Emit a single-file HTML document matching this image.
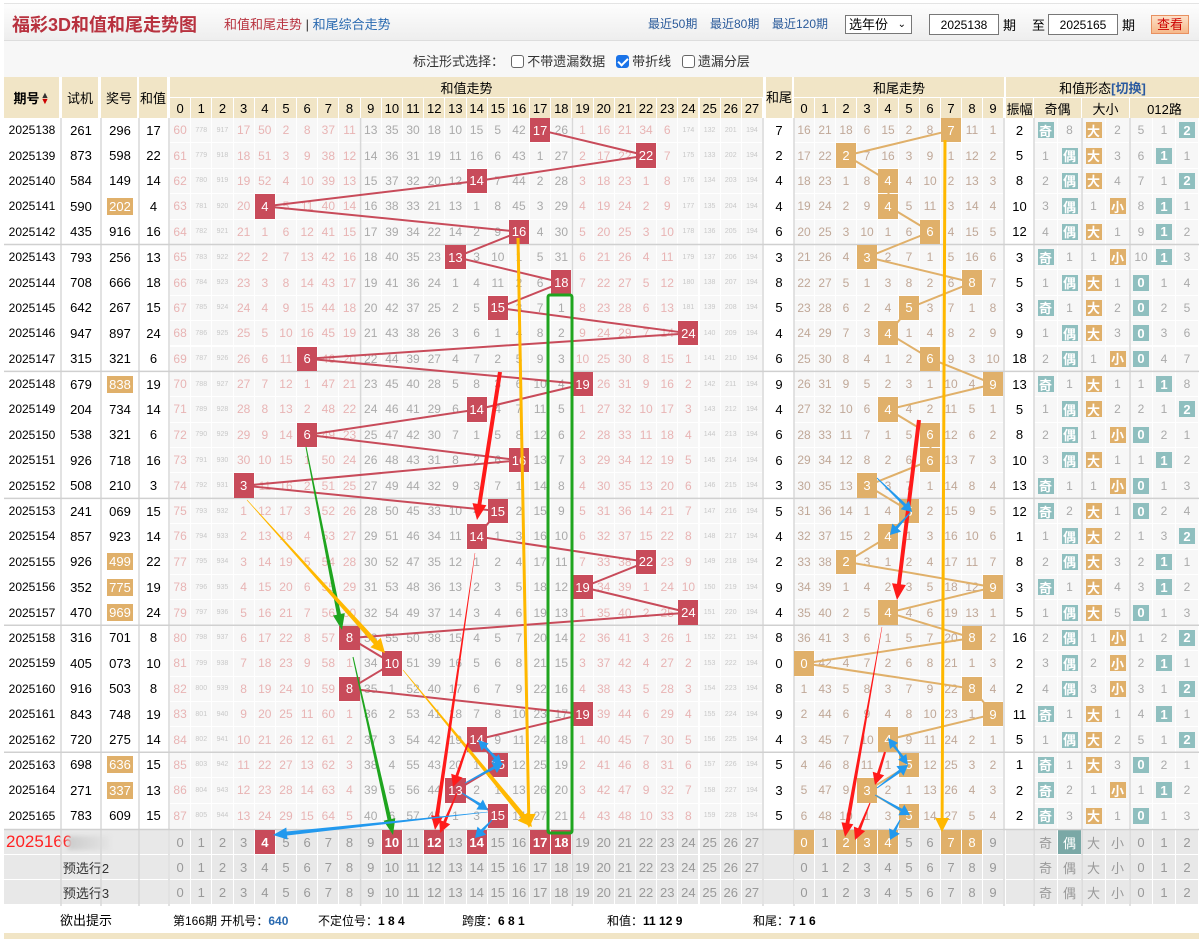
<!DOCTYPE html>
<html><head><meta charset="utf-8">
<style>
*{margin:0;padding:0;box-sizing:border-box}
body{width:1199px;height:939px;overflow:hidden;background:#fff;font-family:"Liberation Sans","Noto Sans CJK SC",sans-serif;font-size:12px;color:#000;position:relative}
#c{position:absolute;left:0;top:0;width:1199px;height:939px}
.a{position:absolute;display:flex;align-items:center;justify-content:center;white-space:nowrap}
.t{position:absolute;white-space:nowrap}
svg{position:absolute;left:0;top:0}
.cb{display:inline-block;width:13px;height:13px;border:1px solid #666;border-radius:3px;vertical-align:-2px;background:#fff;margin-right:3px}
.cbk{background:#1a73e8;border-color:#1a73e8;position:relative}
.cbk:after{content:"";position:absolute;left:3px;top:0px;width:4px;height:8px;border:solid #fff;border-width:0 2px 2px 0;transform:rotate(45deg)}
</style></head><body>
<div id="c">
<div style="position:absolute;left:4px;top:3px;width:1195px;height:38px;background:linear-gradient(#fdfdfd,#eeeeee);border-bottom:1px solid #ddd;border-top:1px solid #e4e4e4"></div>
<div style="position:absolute;left:4px;top:41px;width:1195px;height:36px;background:#f7f7f7"></div>
<div class="t" style="left:12px;top:11px;font-size:18px;font-weight:bold;color:#b8323f">福彩3D和值和尾走势图</div>
<div class="t" style="left:224px;top:14px;font-size:13px;color:#b8323f">和值和尾走势 <span style="color:#333">|</span> <span style="color:#2a6ab0">和尾综合走势</span></div>
<div class="t" style="left:648px;top:15px;font-size:12px;color:#2a5a9a">最近50期</div>
<div class="t" style="left:710px;top:15px;font-size:12px;color:#2a5a9a">最近80期</div>
<div class="t" style="left:772px;top:15px;font-size:12px;color:#2a5a9a">最近120期</div>
<div class="t" style="left:845px;top:15px;width:67px;height:19px;border:1px solid #777;background:#fff;font-size:13px;padding-left:3px;line-height:17px">选年份<span style="position:absolute;right:5px;top:0;font-size:10px">&#8964;</span></div>
<div class="t" style="left:929px;top:14px;width:70px;height:21px;border:1px solid #777;background:#fff;font-size:12px;text-align:center;line-height:20px">2025138</div>
<div class="t" style="left:1003px;top:15px;font-size:13px">期</div>
<div class="t" style="left:1032px;top:15px;font-size:13px">至</div>
<div class="t" style="left:1048px;top:14px;width:70px;height:21px;border:1px solid #777;background:#fff;font-size:12px;text-align:center;line-height:20px">2025165</div>
<div class="t" style="left:1122px;top:15px;font-size:13px">期</div>
<div class="t" style="left:1151px;top:15px;width:38px;height:19px;border:1px solid #e89060;background:linear-gradient(#fde0c8,#f6b88a);color:#c00;font-size:13px;text-align:center;line-height:17px">查看</div>
<div class="t" style="left:413px;top:51px;font-size:13px;color:#333">标注形式选择：&nbsp; <span class="cb"></span>不带遗漏数据 &nbsp; <span class="cb cbk"></span>带折线 &nbsp; <span class="cb"></span>遗漏分层</div>
</div>
<script>
const C=document.getElementById('c');
function box(x,y,w,h,bg,txt,st){const d=document.createElement('div');d.className='a';d.style.cssText=`left:${x}px;top:${y}px;width:${w}px;height:${h}px;background:${bg||'transparent'};${st||''}`;d.innerHTML=txt==null?'':txt;C.appendChild(d);return d;}
const HB='#f1e5c6';
const sx=i=>170+i*21.18, SW=21.18;
const tx=i=>794+i*21;
const RT=118,RH=25.39;
const ry=r=>RT+r*RH;
box(4,77,57,41,HB,'<b>期号</b><span style="font-size:9px;line-height:6px;margin-left:1px;display:inline-flex;flex-direction:column"><span style="color:#333">▲</span><span style="color:#c00">▼</span></span>','font-size:13px;border-right:2px solid #fff');
box(62,77,38,41,HB,'试机','font-size:13px;border-right:2px solid #fff');
box(101,77,38,41,HB,'奖号','font-size:13px;border-right:2px solid #fff');
box(139,77,30,41,HB,'和值','font-size:13px;border-right:2px solid #fff');
box(170,77,593,20,HB,'和值走势','font-size:13px');
for(let i=0;i<28;i++)box(sx(i),98,SW,20,HB,i,'font-size:13px;border-right:1px solid #fff');
box(764,77,30,41,HB,'和尾','font-size:13px;border-left:2px solid #fff;border-right:2px solid #fff;align-items:flex-start;padding-top:10px');
box(794,77,210,20,HB,'和尾走势','font-size:13px');
for(let i=0;i<10;i++)box(tx(i),98,21,20,HB,i,'font-size:13px;border-right:1px solid #fff');
box(1006,77,193,20,HB,'和值形态 <span style="color:#2a5aa0;font-weight:bold">[切换]</span>','font-size:13px');
box(1006,98,28,20,HB,'振幅','font-size:13px;border-right:1px solid #fff');
box(1034,98,48,20,HB,'奇偶','font-size:13px;border-right:1px solid #fff');
box(1082,98,48,20,HB,'大小','font-size:13px;border-right:1px solid #fff');
box(1130,98,69,20,HB,'012路','font-size:13px');
const D=[
[138,'261','296',17,7,2,0],[139,'873','598',22,2,5,0],[140,'584','149',14,4,8,0],[141,'590','202',4,4,10,1],[142,'435','916',16,6,12,0],
[143,'793','256',13,3,3,0],[144,'708','666',18,8,5,0],[145,'642','267',15,5,3,0],[146,'947','897',24,4,9,0],[147,'315','321',6,6,18,0],
[148,'679','838',19,9,13,1],[149,'204','734',14,4,5,0],[150,'538','321',6,6,8,0],[151,'926','718',16,6,10,0],[152,'508','210',3,3,13,0],
[153,'241','069',15,5,12,0],[154,'857','923',14,4,1,0],[155,'926','499',22,2,8,1],[156,'352','775',19,9,3,1],[157,'470','969',24,4,5,1],
[158,'316','701',8,8,16,0],[159,'405','073',10,0,2,0],[160,'916','503',8,8,2,0],[161,'843','748',19,9,11,0],[162,'720','275',14,4,5,0],
[163,'698','636',15,5,1,1],[164,'271','337',13,3,2,1],[165,'783','609',15,5,2,0]];
let so=[60,778,917,17,50,2,8,37,11,13,35,30,18,10,15,5,42,0,26,1,16,21,34,6,174,132,201,194];
let to=[16,21,18,6,15,2,8,0,11,1];
let po=[8,0],bo=[0,2],mo=[5,1,0];
const RED='#c84b5a',TAN='#e0b06a',TEAL='#8fbfbf';
let sumPts=[],tailPts=[];
D.forEach((d,r)=>{
 const y=ry(r),h=RH-1;
 const [p,t,j,s,tl,am,hl]=d;
 if(r>0){for(let i=0;i<28;i++)so[i]=(i==27?194:so[i]+1);for(let i=0;i<10;i++)to[i]++;po=po.map(v=>v+1);bo=bo.map(v=>v+1);mo=mo.map(v=>v+1);}
 so[s]=0;to[tl]=0;po[s%2]=0;bo[s>=14?0:1]=0;mo[s%3]=0;
 box(4,y,56,h,'#fff','2025'+p,'font-size:12px');
 box(62,y,38,h,'#fff',t,'font-size:13px');
 box(101,y,38,h,'#fff',hl?`<span style="background:${TAN};color:#fff;padding:1px 2px">${j}</span>`:j,'font-size:13px');
 box(139,y,29,h,'#fff',s,'font-size:13px');
 for(let i=0;i<28;i++){
  const v=so[i];
  if(v===0){box(sx(i),y,SW-1,h,RED,i,'color:#fff;font-size:13px;z-index:2');sumPts.push([sx(i)+SW/2,y+h/2]);}
  else{const pink=(i<9||i>18);const tiny=v>=100;box(sx(i),y,SW-1,h,'#f7f7f7',v,tiny?'font-size:7px;color:#c8c8c8':`font-size:12px;color:${pink?'#e8b4b4':'#aaa'}`);}
 }
 box(764,y,30,h,'#fff',tl,'font-size:13px');
 for(let i=0;i<10;i++){
  const v=to[i];
  if(v===0){box(tx(i),y,20,h,TAN,i,'color:#fff;font-size:13px;z-index:2');tailPts.push([tx(i)+10.5,y+h/2]);}
  else box(tx(i),y,20,h,'#f7f7f7',v,'font-size:12px;color:#c0a898');
 }
 box(1006,y,27,h,'#fff',am,'font-size:13px');
 const sm=(arr,x0,w,labels,cols)=>arr.forEach((v,k)=>{
  if(v===0)box(x0+k*w,y,w-1,h,'#f7f7f7',`<span style="background:${cols};color:#fff;font-weight:bold;width:16px;height:16px;display:flex;align-items:center;justify-content:center">${labels[k]}</span>`,'font-size:13px');
  else box(x0+k*w,y,w-1,h,'#f7f7f7',v,'font-size:12px;color:#aaa');});
 sm([po[1],po[0]],1034,24,['奇','偶'],TEAL);
 sm(bo,1082,24,['大','小'],TAN);
 sm(mo,1130,23,['0','1','2'],TEAL);
});
const BG='#e8e8e8';
const rows=[830,855,880];
rows.forEach((y,k)=>{
 box(4,y,164,24,BG,k==0?'':('预选行'+(k+1)),'font-size:13px;color:#333');
 for(let i=0;i<28;i++){const hit=k==0&&[4,10,12,14,17,18].includes(i);box(sx(i),y,SW-1,24,hit?RED:BG,i,`font-size:13px;color:${hit?'#fff':'#999'};${hit?'font-weight:bold;z-index:2':''}`);}
 box(764,y,30,24,BG,'');
 for(let i=0;i<10;i++){const hit=k==0&&[0,2,3,4,7,8].includes(i);box(tx(i),y,20,24,hit?TAN:BG,i,`font-size:13px;color:${hit?'#fff':'#999'};z-index:2`);}
 box(1006,y,27,24,BG,'');
 ['奇','偶'].forEach((l,q)=>{const hit=k==0&&q==1;box(1034+q*24,y,23,24,hit?'#7aa8a6':BG,l,`font-size:13px;color:${hit?'#fff':'#999'}`);});
 ['大','小'].forEach((l,q)=>box(1082+q*24,y,23,24,BG,l,'font-size:13px;color:#999'));
 ['0','1','2'].forEach((l,q)=>box(1130+q*23,y,22,24,BG,l,'font-size:13px;color:#999'));
});
box(6,832,70,20,'','2025166','font-size:17px;color:#f22;justify-content:flex-start');
box(68,836,42,14,'linear-gradient(90deg,#ccc,#e4e4e4)','','filter:blur(2px)');
box(4,906,164,26,'#fff','欲出提示','font-size:13px');
const H=[[173,'第166期 开机号：<b style="color:#2a6ab0">640</b>'],[318,'不定位号：<b>1 8 4</b>'],[462,'跨度：<b>6 8 1</b>'],[607,'和值：<b>11 12 9</b>'],[753,'和尾：<b>7 1 6</b>']];
H.forEach(([x,s])=>{const d=document.createElement('div');d.className='t';d.style.cssText=`left:${x}px;top:912px;font-size:12px`;d.innerHTML=s;C.appendChild(d);});
box(4,933,1195,6,HB,'');
let g='';
const V=[61,101,139,169,360.6,572.4,763,794,1004,1034,1082,1130];
V.forEach(x=>g+=`<line x1="${x}" y1="118" x2="${x}" y2="906" stroke="#d8d8d8" stroke-width="1.5"/>`);
[5,10,15,20,25].forEach(r=>g+=`<line x1="4" y1="${ry(r)-0.5}" x2="1199" y2="${ry(r)-0.5}" stroke="#d0d0d0" stroke-width="1.5"/>`);
g+=`<line x1="4" y1="829.5" x2="1199" y2="829.5" stroke="#d0d0d0" stroke-width="1.5"/>`;
let lines='';
const pl=(pts,c)=>`<polyline points="${pts.map(p=>p.join(',')).join(' ')}" fill="none" stroke="${c}" stroke-width="2"/>`;
lines+=pl(sumPts,RED)+pl(tailPts,TAN);
const s1=document.createElementNS('http://www.w3.org/2000/svg','svg');
s1.setAttribute('width',1199);s1.setAttribute('height',939);s1.style.zIndex=1;s1.innerHTML=g+lines;C.appendChild(s1);
function ar(x1,y1,x2,y2,c,w0,w1,hl,hw){
 const dx=x2-x1,dy=y2-y1,L=Math.hypot(dx,dy),ux=dx/L,uy=dy/L,nx=-uy,ny=ux;
 const bx=x2-ux*hl,by=y2-uy*hl;
 const P=[[x1+nx*w0/2,y1+ny*w0/2],[bx+nx*w1/2,by+ny*w1/2],[bx+nx*hw,by+ny*hw],[x2,y2],[bx-nx*hw,by-ny*hw],[bx-nx*w1/2,by-ny*w1/2],[x1-nx*w0/2,y1-ny*w0/2]];
 return `<polygon points="${P.map(p=>p.map(v=>v.toFixed(1)).join(',')).join(' ')}" fill="${c}"/>`;
}
const G='#1fa51f',Y='#ffb800',R='#ff1a1a',B='#2299ee';
let a='';
a+=`<rect x="548" y="295" width="24" height="538" rx="2" fill="none" stroke="${G}" stroke-width="3"/>`;
a+=ar(306,447,342,630,G,1,4,16,6);
a+=ar(353,657,393,835,G,1,4,16,6);
a+=ar(247,500,385,653,Y,0.5,5,14,7);
a+=ar(403,670,532,827,Y,0.5,5,14,7);
a+=ar(518,238,529,828,Y,3,3,14,7);
a+=ar(945,140,942,832,Y,3,3,14,7);
a+=ar(500,372,477,520,R,4,4,16,7);
a+=ar(475,553,435,830,R,0.5,4,14,6);
a+=ar(468,743,453,787,R,2,3,12,6);
a+=ar(457,793,440,833,R,1,3,12,6);
a+=ar(488,812,273,835,B,0.5,4,14,6);
a+=ar(490,752,478,740,B,2,3,10,5)+ar(490,752,502,765,B,2,3,10,5);
a+=ar(465,783,503,763,B,1,3,10,6);
a+=ar(462,793,488,810,B,1,3,10,6);
a+=ar(492,820,475,838,B,1,3,10,6);
a+=ar(919,420,897,600,R,4,4,16,7);
a+=ar(882,627,845,837,R,0.5,4,14,6);
a+=ar(885,752,875,785,R,2,3,12,6);
a+=ar(870,803,855,840,R,1,3,12,6);
a+=ar(877,478,912,512,B,1,3,10,6);
a+=ar(910,513,890,535,B,1,3,10,6);
a+=ar(898,751,888,738,B,2,3,10,5)+ar(898,751,908,765,B,2,3,10,5);
a+=ar(877,788,908,765,B,1,3,10,6);
a+=ar(875,795,910,815,B,1,3,10,6);
a+=ar(900,820,890,840,B,1,3,10,6);
const s2=document.createElementNS('http://www.w3.org/2000/svg','svg');
s2.setAttribute('width',1199);s2.setAttribute('height',939);s2.style.zIndex=5;s2.innerHTML=a;C.appendChild(s2);
</script>
</body></html>
